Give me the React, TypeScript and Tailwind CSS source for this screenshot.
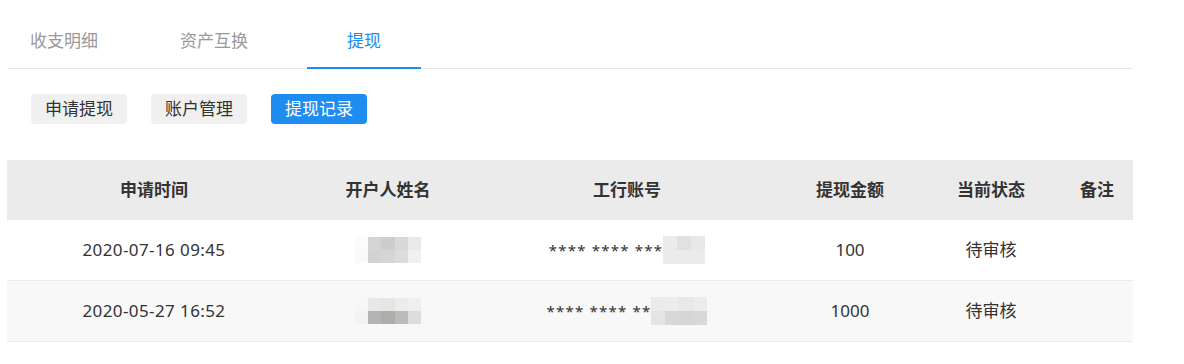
import React from "react";

const font = { fontFamily: '"Noto Sans", "Noto Sans CJK SC", sans-serif' };

function Mosaic({ rows, cell = 14 }: { rows: string[][]; cell?: number }) {
  return (
    <div className="inline-flex flex-col align-middle">
      {rows.map((r, i) => (
        <div key={i} className="flex">
          {r.map((c, j) => (
            <div key={j} style={{ width: cell, height: cell, background: c }} />
          ))}
        </div>
      ))}
    </div>
  );
}

const rowsData = [
  {
    time: "2020-07-16 09:45",
    acct: "**** **** ***",
    name: [
      ["#fbfbfa", "#d4d4d4", "#cfcdcb", "#d8d8da", "#e8e9ea"],
      ["#fafaf9", "#d2d2d2", "#d6d5d3", "#dcdcdc", "#eff0f0"],
    ],
    acctM: [
      ["#ebebeb", "#e1e1e1", "#e8e8e8"],
      ["#ebebeb", "#ebebeb", "#ebebeb"],
    ],
    amount: "100",
    bg: "bg-white",
  },
  {
    time: "2020-05-27 16:52",
    acct: "**** **** **",
    name: [
      ["#f7f7f7", "#e8e8e8", "#e6e6e6", "#ececec", "#efefef"],
      ["#f3f3f3", "#b4b4b4", "#b0aca8", "#bbbbbd", "#dcdcde"],
    ],
    acctM: [
      ["#ebebeb", "#ececec", "#e8e8e8", "#ececec"],
      ["#e4e4e4", "#d8d8d8", "#d6d6d6", "#d8d8d8"],
    ],
    amount: "1000",
    bg: "bg-[#f8f8f8]",
  },
];

export default function App() {
  return (
    <div className="w-[1184px] h-[364px] bg-white text-[#333]" style={font}>
      <div className="ml-[7px] w-[1126px]">
        {/* Tabs */}
        <div className="flex gap-[36px] border-b border-[#e8e8e8] h-[69px]">
          <div className="w-[114px] h-[68px] flex items-center justify-center pt-[14px] text-[17px] text-[#999]">收支明细</div>
          <div className="w-[114px] h-[68px] flex items-center justify-center pt-[14px] text-[17px] text-[#999]">资产互换</div>
          <div className="w-[114px] h-[69px] flex items-center justify-center pt-[14px] text-[17px] text-[#1e8cf0] border-b-2 border-[#1e8cf0]">提现</div>
        </div>
        {/* Buttons */}
        <div className="flex gap-[24px] pl-[24px] mt-[25px]">
          <div className="w-[96px] h-[30px] rounded-[4px] bg-[#f0f0f0] flex items-center justify-center text-[17px] text-[#333]">申请提现</div>
          <div className="w-[96px] h-[30px] rounded-[4px] bg-[#f0f0f0] flex items-center justify-center text-[17px] text-[#333]">账户管理</div>
          <div className="w-[96px] h-[30px] rounded-[4px] bg-[#1e8cf0] flex items-center justify-center text-[17px] text-white">提现记录</div>
        </div>
        {/* Table */}
        <div className="mt-[36px]">
          <div className="grid grid-cols-[294px_174px_304px_142px_140px_72px] h-[60px] bg-[#ebebeb] items-center text-center text-[17px] font-bold text-[#333]">
            <div>申请时间</div>
            <div>开户人姓名</div>
            <div>工行账号</div>
            <div>提现金额</div>
            <div>当前状态</div>
            <div>备注</div>
          </div>
          {rowsData.map((r, i) => (
            <div
              key={i}
              className={`grid grid-cols-[294px_174px_304px_142px_140px_72px] h-[61px] items-center text-center text-[17px] text-[#333] border-b border-[#ebebeb] ${r.bg}`}
            >
              <div className="tracking-[0.4px]">{r.time}</div>
              <div className="flex justify-center">
                <Mosaic rows={r.name} cell={13.2} />
              </div>
              <div className="flex items-center justify-center">
                <span className="text-[15px] tracking-[1.2px] text-[#333]">{r.acct}</span>
                <Mosaic rows={r.acctM} cell={14} />
              </div>
              <div>{r.amount}</div>
              <div>待审核</div>
              <div></div>
            </div>
          ))}
        </div>
      </div>
    </div>
  );
}
